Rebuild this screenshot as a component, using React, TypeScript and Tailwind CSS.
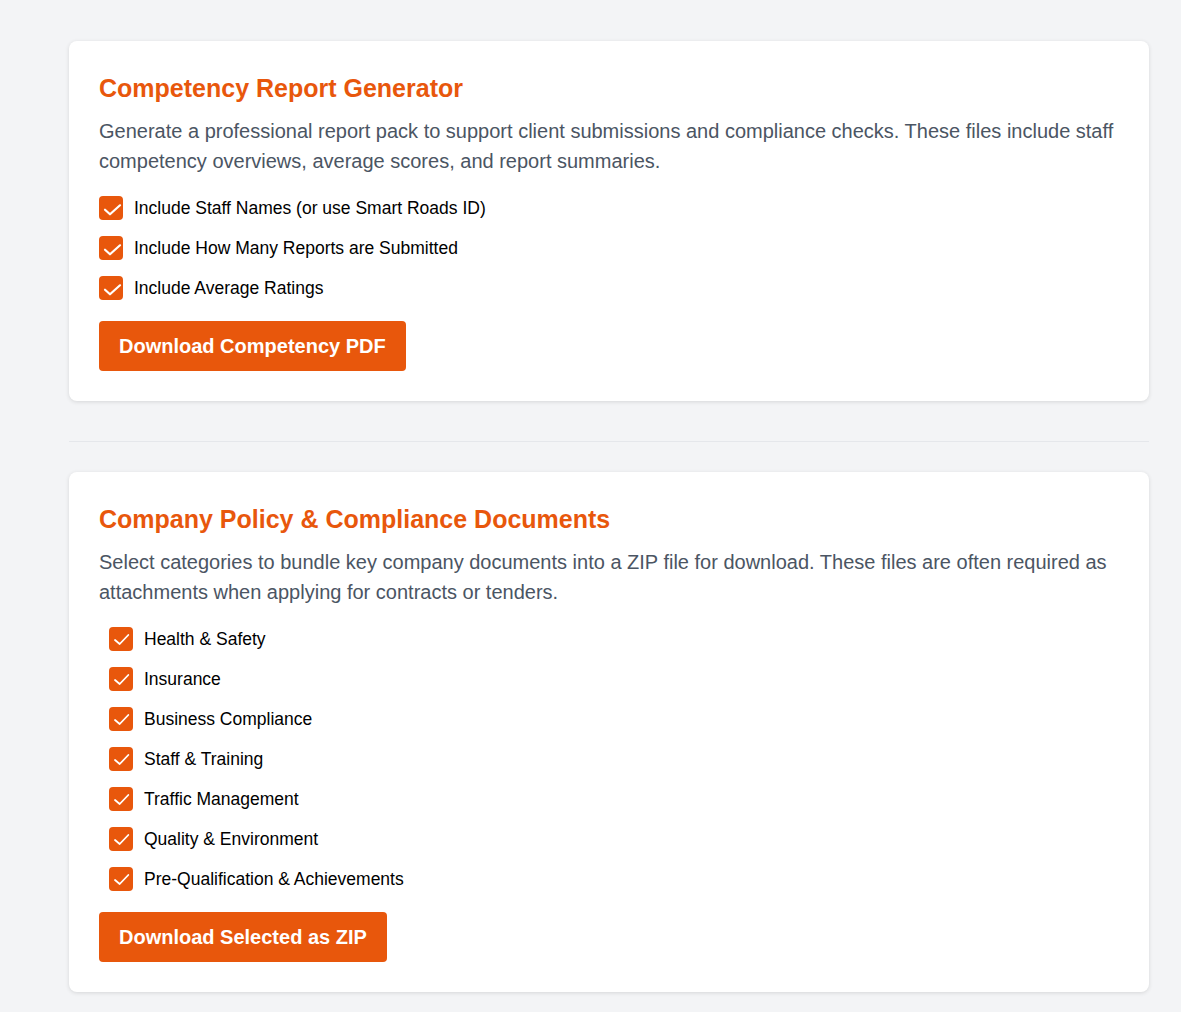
import { useState } from "react";

const reportOptions = [
  "Include Staff Names (or use Smart Roads ID)",
  "Include How Many Reports are Submitted",
  "Include Average Ratings",
];

const docCategories = [
  "Health & Safety",
  "Insurance",
  "Business Compliance",
  "Staff & Training",
  "Traffic Management",
  "Quality & Environment",
  "Pre-Qualification & Achievements",
];

const CheckBox = ({
  checked,
  onToggle,
  round,
}: {
  checked: boolean;
  onToggle: () => void;
  round?: boolean;
}) => (
  <button
    type="button"
    onClick={onToggle}
    className={`w-6 h-6 shrink-0 flex items-center justify-center ${
      round ? "rounded" : "rounded-sm"
    } ${checked ? "bg-[#e8570c]" : "bg-white border border-gray-400"}`}
  >
    {checked && (
      <svg width="24" height="24" viewBox="0 0 24 24" fill="none">
        {round ? (
          <path
            d="M6 13l4.7 4L19.3 8"
            stroke="white"
            strokeWidth="1.8"
            strokeLinecap="round"
            strokeLinejoin="round"
          />
        ) : (
          <path
            d="M6 13.7l5 4.6L21 9.3"
            stroke="white"
            strokeWidth="2.2"
            strokeLinecap="round"
            strokeLinejoin="round"
          />
        )}
      </svg>
    )}
  </button>
);

const App = () => {
  const [report, setReport] = useState(reportOptions.map(() => true));
  const [docs, setDocs] = useState(docCategories.map(() => true));

  return (
    <div className="min-h-screen bg-[#f3f4f6] font-[family-name:'Liberation_Sans',Arial,sans-serif]">
      <div className="w-[1080px] ml-[69px] pt-[41px] pb-5">
        {/* Competency report */}
        <section className="bg-white rounded-lg shadow-[0_1px_4px_rgba(0,0,0,0.12)] p-[30px]">
          <h2 className="text-[25px] leading-8 font-bold text-[#e8570c] pt-px">
            Competency Report Generator
          </h2>
          <p className="mt-3 text-xl leading-[30px] text-[#4b5563]">
            Generate a professional report pack to support client submissions
            and compliance checks. These files include staff competency
            overviews, average scores, and report summaries.
          </p>
          <div className="mt-5 flex flex-col gap-4">
            {reportOptions.map((label, i) => (
              <label key={label} className="flex items-center gap-[11px] text-[17.5px] leading-6 text-black">
                <CheckBox
                  checked={report[i]}
                  onToggle={() =>
                    setReport(report.map((v, j) => (j === i ? !v : v)))
                  }
                />
                <span>{label}</span>
              </label>
            ))}
          </div>
          <button className="mt-[21px] h-[50px] px-5 rounded bg-[#e8570c] text-white text-xl font-bold">
            Download Competency PDF
          </button>
        </section>

        <hr className="mt-10 mb-[30px] border-0 border-t border-[#e5e7eb]" />

        {/* Company docs */}
        <section className="bg-white rounded-lg shadow-[0_1px_4px_rgba(0,0,0,0.12)] p-[30px]">
          <h2 className="text-[25px] leading-8 font-bold text-[#e8570c] pt-px">
            Company Policy &amp; Compliance Documents
          </h2>
          <p className="mt-3 text-xl leading-[30px] text-[#4b5563]">
            Select categories to bundle key company documents into a ZIP file
            for download. These files are often required as attachments when
            applying for contracts or tenders.
          </p>
          <div className="mt-5 pl-2.5 flex flex-col gap-4">
            {docCategories.map((label, i) => (
              <label key={label} className="flex items-center gap-[11px] text-[17.5px] leading-6 text-black">
                <CheckBox
                  round
                  checked={docs[i]}
                  onToggle={() =>
                    setDocs(docs.map((v, j) => (j === i ? !v : v)))
                  }
                />
                <span>{label}</span>
              </label>
            ))}
          </div>
          <button className="mt-[21px] h-[50px] px-5 rounded bg-[#e8570c] text-white text-xl font-bold">
            Download Selected as ZIP
          </button>
        </section>
      </div>
    </div>
  );
};

export default App;
